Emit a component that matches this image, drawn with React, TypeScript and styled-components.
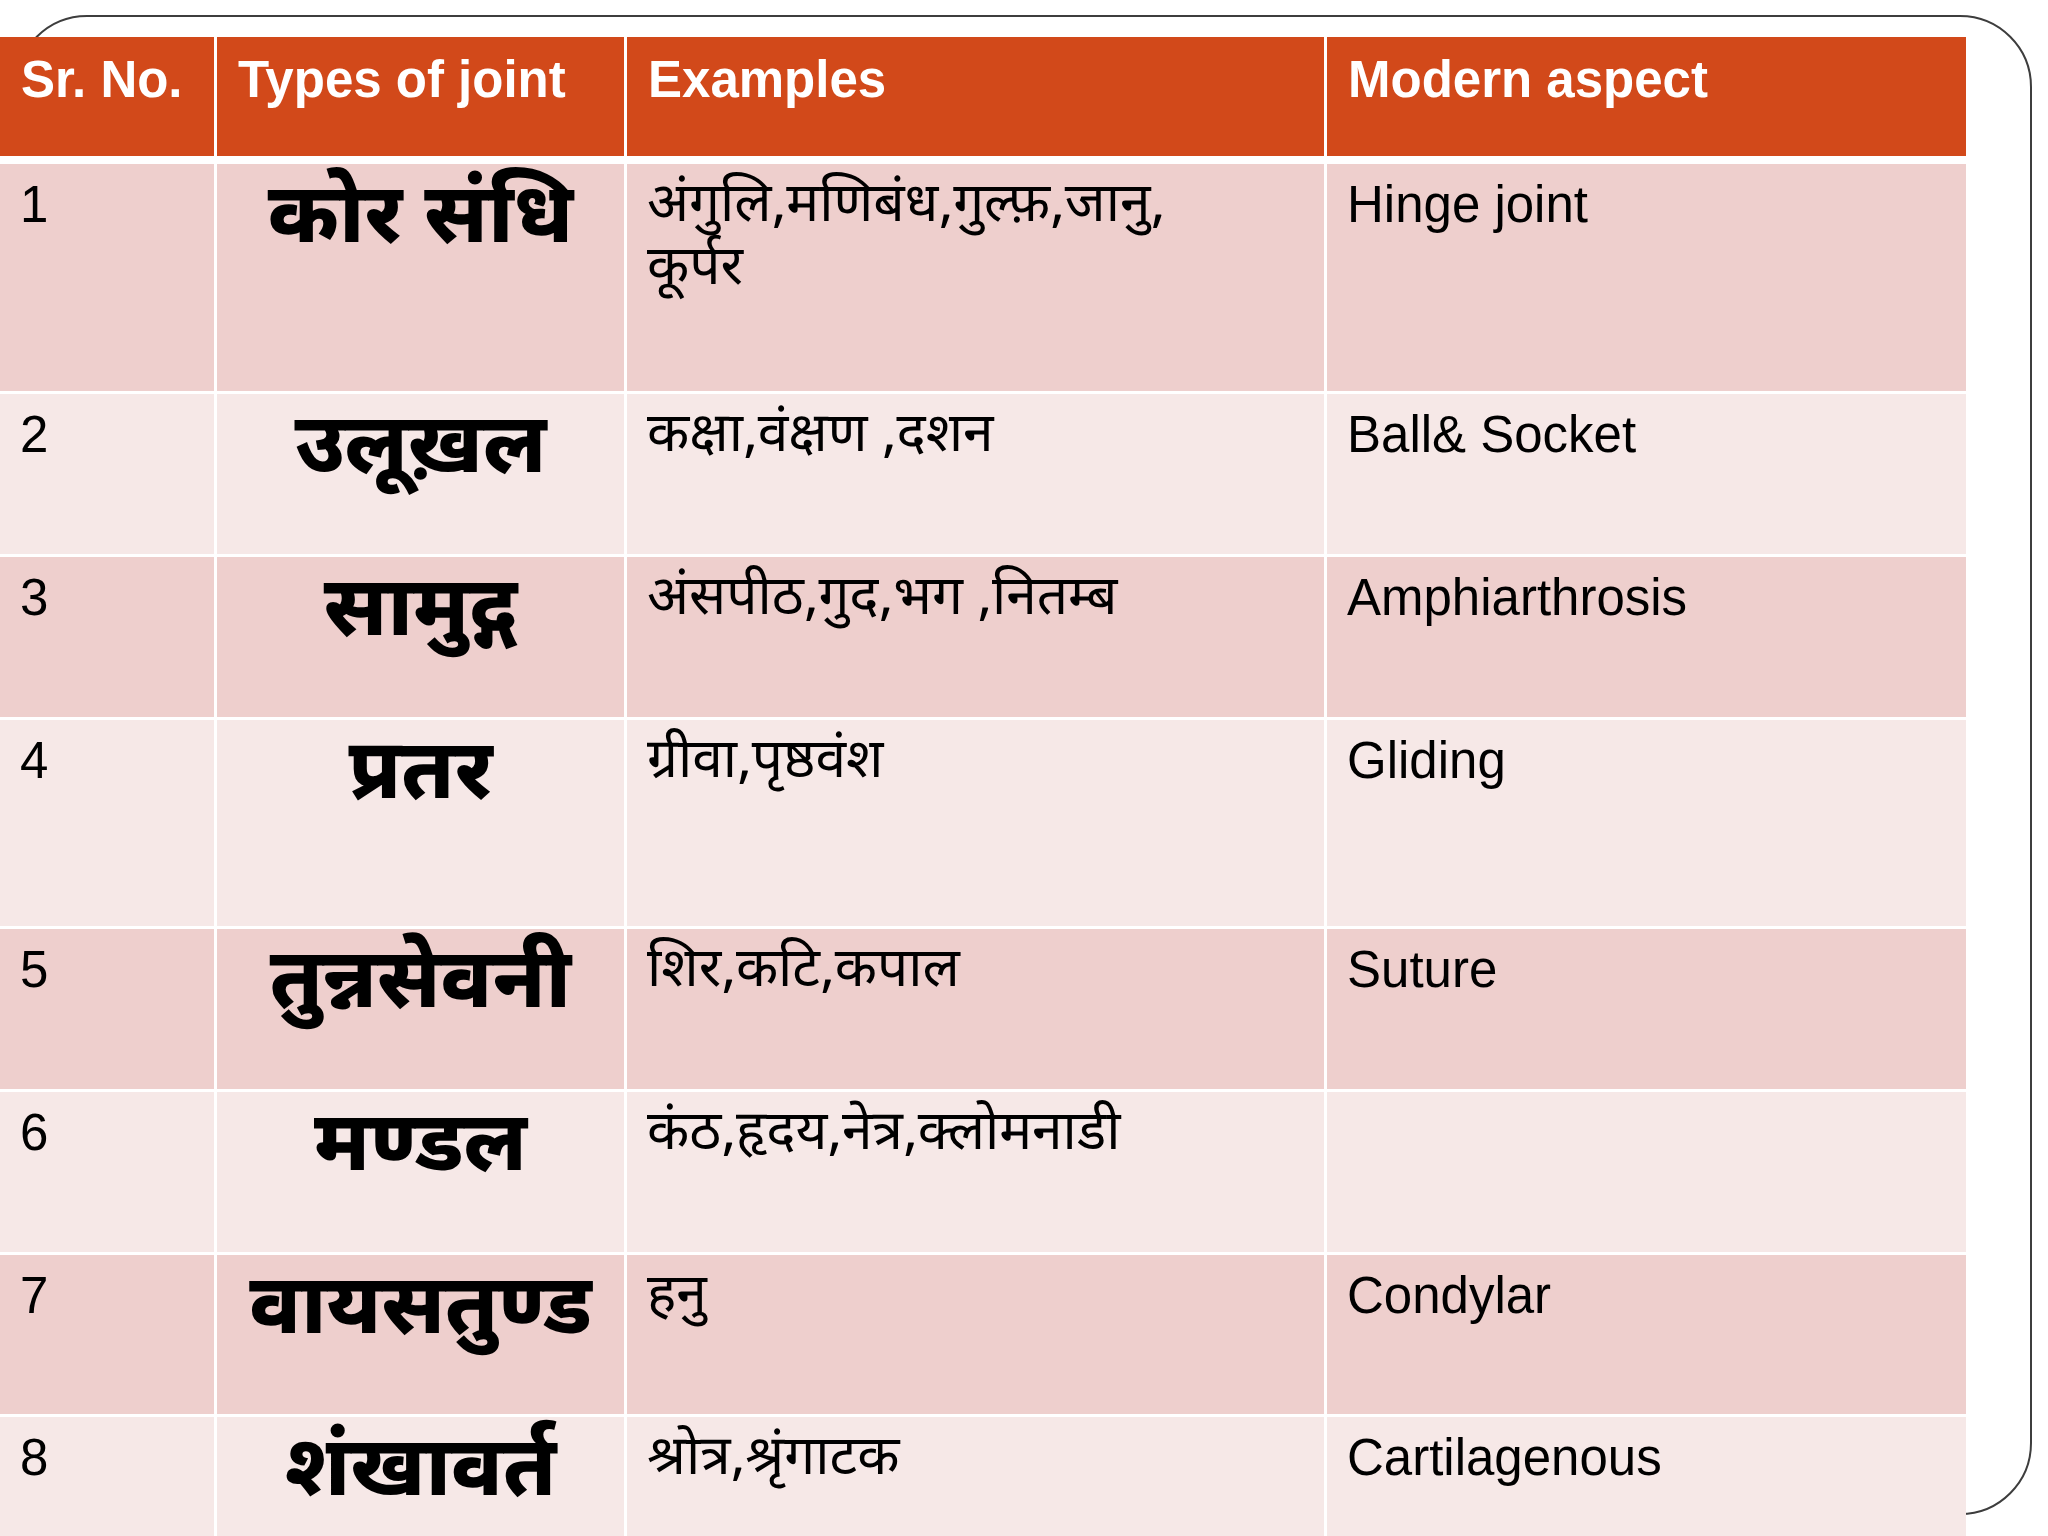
import styled, { createGlobalStyle } from 'styled-components'

const GlobalStyle = createGlobalStyle`
    html, body {
        margin: 0;
        padding: 0;
        background: #ffffff;
    }
`

const LATIN = `'Liberation Sans', Arial, sans-serif`
const DEVA = `'Noto Sans Devanagari', 'Lohit Devanagari', Mangal, 'Noto Sans', 'Liberation Sans', sans-serif`

const Slide = styled.div`
    position: relative;
    width: 2048px;
    height: 1536px;
    overflow: hidden;
    background: #ffffff;
    padding-top: 37px;
    box-sizing: border-box;
`

const Frame = styled.div`
    position: absolute;
    left: 15px;
    top: 15px;
    width: 2017px;
    height: 1500px;
    box-sizing: border-box;
    border: 2px solid #3d3d3d;
    border-radius: 72px;
`

const Table = styled.div`
    position: relative;
    z-index: 1;
    width: 1966px;
    display: flex;
    flex-direction: column;
    gap: 3px;
    background: #ffffff;
`

const Row = styled.div<{ $height: number; $header?: boolean }>`
    display: grid;
    grid-template-columns: 214px 407px 697px 639px;
    column-gap: 3px;
    height: ${({ $height }) => $height}px;
    margin-bottom: ${({ $header }) => ($header ? '5px' : '0')};
`

const HeadCell = styled.div`
    background: #d2491a;
    color: #ffffff;
    font-family: ${LATIN};
    font-weight: 700;
    font-size: 51px;
    line-height: 1.15;
    padding: 14px 0 0 21px;
`

const Cell = styled.div<{ $shade: boolean }>`
    background: ${({ $shade }) => ($shade ? '#eecfcd' : '#f6e8e7')};
    color: #000000;
    padding: 12px 0 0 20px;
    overflow: hidden;
`

const NumText = styled.div`
    font-family: ${LATIN};
    font-size: 51px;
    line-height: 1.15;
`

const JointCell = styled(Cell)`
    padding: 0;
    text-align: center;
`

const JointText = styled.div`
    font-family: ${DEVA};
    font-weight: 800;
    font-size: 84px;
    line-height: 1.2;
    padding-top: 8px;
    white-space: nowrap;
`

const ExampleText = styled.div`
    font-family: ${DEVA};
    font-size: 55px;
    line-height: 63px;
    padding-top: 0;
`

const AspectText = styled.div`
    font-family: ${LATIN};
    font-size: 51px;
    line-height: 1.15;
`

type Joint = {
    no: number
    name: string
    examples: string[]
    modern: string
    height: number
}

const joints: Joint[] = [
    {
        no: 1,
        name: 'कोर संधि',
        examples: ['अंगुलि,मणिबंध,गुल्फ़,जानु,', 'कूर्पर'],
        modern: 'Hinge joint',
        height: 227,
    },
    { no: 2, name: 'उलूख़ल', examples: ['कक्षा,वंक्षण ,दशन'], modern: 'Ball& Socket', height: 160 },
    { no: 3, name: 'सामुद्ग', examples: ['अंसपीठ,गुद,भग ,नितम्ब'], modern: 'Amphiarthrosis', height: 160 },
    { no: 4, name: 'प्रतर', examples: ['ग्रीवा,पृष्ठवंश'], modern: 'Gliding', height: 206 },
    { no: 5, name: 'तुन्नसेवनी', examples: ['शिर,कटि,कपाल'], modern: 'Suture', height: 160 },
    { no: 6, name: 'मण्डल', examples: ['कंठ,हृदय,नेत्र,क्लोमनाडी'], modern: '', height: 160 },
    { no: 7, name: 'वायसतुण्ड', examples: ['हनु'], modern: 'Condylar', height: 159 },
    { no: 8, name: 'शंखावर्त', examples: ['श्रोत्र,श्रृंगाटक'], modern: 'Cartilagenous', height: 160 },
]

export default function App() {
    return (
        <>
            <GlobalStyle />
            <Slide>
                <Frame />
                <Table>
                    <Row $height={119} $header>
                        <HeadCell>Sr. No.</HeadCell>
                        <HeadCell>Types of joint</HeadCell>
                        <HeadCell>Examples</HeadCell>
                        <HeadCell>Modern aspect</HeadCell>
                    </Row>
                    {joints.map((j) => {
                        const shade = j.no % 2 === 1
                        return (
                            <Row key={j.no} $height={j.height}>
                                <Cell $shade={shade}>
                                    <NumText>{j.no}</NumText>
                                </Cell>
                                <JointCell $shade={shade}>
                                    <JointText>{j.name}</JointText>
                                </JointCell>
                                <Cell $shade={shade}>
                                    <ExampleText>
                                        {j.examples.map((line, i) => (
                                            <div key={i}>{line}</div>
                                        ))}
                                    </ExampleText>
                                </Cell>
                                <Cell $shade={shade}>
                                    <AspectText>{j.modern}</AspectText>
                                </Cell>
                            </Row>
                        )
                    })}
                </Table>
            </Slide>
        </>
    )
}
